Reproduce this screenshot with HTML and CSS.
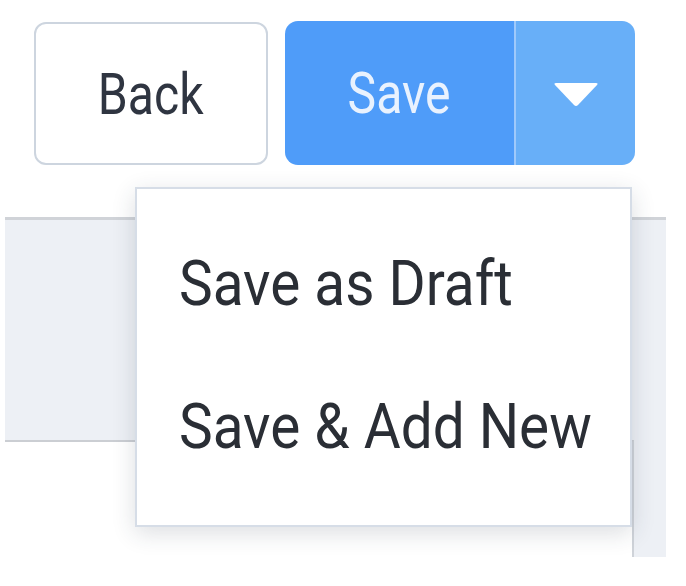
FILE: index.html
```html
<!DOCTYPE html>
<html>
<head>
<meta charset="utf-8">
<link rel="stylesheet" href="styles.css">
</head>
<body>
<div class="page">
  <div class="toolbar">
    <button class="btn btn-back"><span class="txt">Back</span></button>
    <div class="split">
      <button class="btn btn-save"><span class="txt">Save</span></button>
      <button class="btn btn-toggle" aria-label="More save options">
        <svg class="caret" width="46" height="25" viewBox="0 0 46 25"><path d="M3 1 H43 Q45.5 1 44 3 L25 23 Q23 25 21 23 L2 3 Q0.5 1 3 1 Z" fill="#fff"/></svg>
      </button>
      <div class="menu">
        <div class="menu-item"><span class="txt">Save as Draft</span></div>
        <div class="menu-item"><span class="txt">Save &amp; Add New</span></div>
      </div>
    </div>
  </div>
  <div class="panel">
    <div class="panel-body"></div>
    <div class="panel-foot"></div>
  </div>
</div>
</body>
</html>
```
FILE: styles.css
```css
* { box-sizing: border-box; }
html, body { margin: 0; padding: 0; background: #fff; }
body { font-family: Roboto, "Liberation Sans", sans-serif; width: 686px; height: 586px; overflow: hidden; }

.page { padding-top: 21px; }

.toolbar {
  display: flex;
  align-items: stretch;
  gap: 17px;
  padding-left: 34px;
  height: 144px;
}

.btn {
  font-family: inherit;
  margin: 0;
  border: 0;
  padding: 0;
  display: flex;
  align-items: center;
  justify-content: center;
  font-size: 58px;
}

.txt { display: inline-block; transform: scaleX(0.83); }

.btn-back {
  width: 234px;
  height: 143px;
  margin-top: 1px;
  background: #fff;
  border: 2px solid #cdd5df;
  border-radius: 12px;
  color: #2f3541;
}

.split {
  position: relative;
  display: flex;
  height: 144px;
}

.btn-save {
  width: 231px;
  background: #4f9cf9;
  color: #e9f2fe;
  border-radius: 13px 0 0 13px;
  border-right: 2px solid #9fc9fb;
}

.btn-toggle {
  width: 119px;
  background: #68aff8;
  border-radius: 0 13px 13px 0;
}

.caret { display: block; margin-top: 2px; }

.menu {
  position: absolute;
  left: -150px;
  top: 166px;
  width: 497px;
  height: 340px;
  background: #fff;
  border: 2px solid #d6dde7;
  box-shadow: 0 6px 22px rgba(40, 50, 70, 0.16);
  padding: 23px 0 27px 42px;
  z-index: 2;
}

.menu-item {
  font-size: 63px;
  line-height: 143px;
  height: 143px;
  color: #2a2e35;
  white-space: nowrap;
}
.menu-item .txt { transform: scaleX(0.9); transform-origin: left center; }

.panel {
  margin-top: 52px;
  margin-left: 5px;
  width: 661px;
  height: 340px;
  background: #edf0f5;
  border-top: 3px solid #d0d3d8;
  display: flex;
  flex-direction: column;
}

.panel-body { height: 220px; }

.panel-foot {
  flex: 1;
  width: 629px;
  background: #fff;
  border-top: 2px solid #cbced3;
  border-right: 2px solid #cfd3d9;
}
```
